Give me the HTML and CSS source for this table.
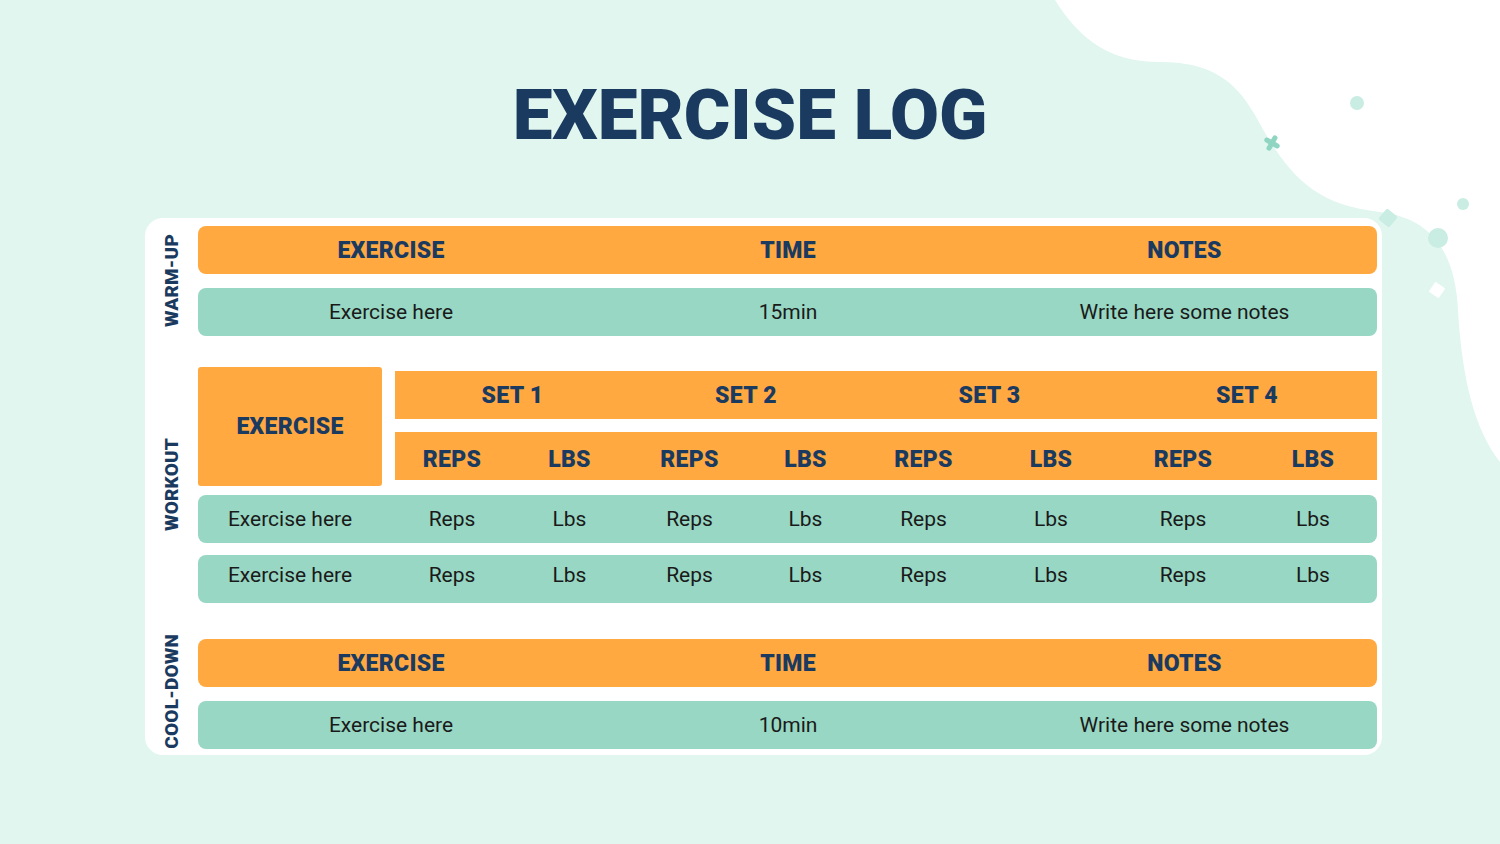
FILE: index.html
```html
<!DOCTYPE html>
<html lang="en">
<head>
<meta charset="utf-8">
<title>Exercise Log</title>
<link rel="stylesheet" href="styles.css">
</head>
<body>
<svg class="decor" width="1500" height="844" viewBox="0 0 1500 844" aria-hidden="true">
  <path d="M1055,0 C1080,40 1110,62 1160,62 C1210,62 1235,80 1255,115 C1285,170 1310,205 1380,212 C1430,218 1455,250 1458,310 C1462,380 1475,430 1500,462 L1500,0 Z" fill="#ffffff"/>
  <circle cx="1357" cy="103" r="7" fill="#c9ede2"/>
  <circle cx="1463" cy="204" r="6" fill="#c9ede2"/>
  <circle cx="1438" cy="238" r="10" fill="#c9ede2"/>
  <rect x="1381" y="211" width="14" height="14" rx="2" fill="#c9ede2" transform="rotate(40 1388 218)"/>
  <rect x="1431" y="284" width="12" height="12" rx="1" fill="#ffffff" transform="rotate(35 1437 290)"/>
  <g transform="rotate(30 1272 143)" stroke="#8fd5c1" stroke-width="5" stroke-linecap="round">
    <line x1="1272" y1="137" x2="1272" y2="149"/>
    <line x1="1266" y1="143" x2="1278" y2="143"/>
  </g>
</svg>

<main class="page">
  <h1 class="title">EXERCISE LOG</h1>

  <section class="card">
    <div class="block">
      <div class="side"><span class="side-label">WARM-UP</span></div>
      <div class="rows">
        <div class="bar head three">
          <span>EXERCISE</span><span>TIME</span><span>NOTES</span>
        </div>
        <div class="bar data three">
          <span>Exercise here</span><span>15min</span><span>Write here some notes</span>
        </div>
      </div>
    </div>

    <div class="block workout">
      <div class="side"><span class="side-label">WORKOUT</span></div>
      <div class="rows">
        <div class="w-head">
          <div class="w-ex">EXERCISE</div>
          <div class="w-sets">
            <span class="span2">SET 1</span>
            <span class="span2">SET 2</span>
            <span class="span2">SET 3</span>
            <span class="span2">SET 4</span>
          </div>
          <div class="w-sub">
            <span>REPS</span><span>LBS</span><span>REPS</span><span>LBS</span>
            <span>REPS</span><span>LBS</span><span>REPS</span><span>LBS</span>
          </div>
        </div>
        <div class="w-data-list">
          <div class="bar data wgrid">
            <span class="first">Exercise here</span>
            <span>Reps</span><span>Lbs</span><span>Reps</span><span>Lbs</span>
            <span>Reps</span><span>Lbs</span><span>Reps</span><span>Lbs</span>
          </div>
          <div class="bar data wgrid">
            <span class="first">Exercise here</span>
            <span>Reps</span><span>Lbs</span><span>Reps</span><span>Lbs</span>
            <span>Reps</span><span>Lbs</span><span>Reps</span><span>Lbs</span>
          </div>
        </div>
      </div>
    </div>

    <div class="block cool">
      <div class="side"><span class="side-label">COOL-DOWN</span></div>
      <div class="rows">
        <div class="bar head three">
          <span>EXERCISE</span><span>TIME</span><span>NOTES</span>
        </div>
        <div class="bar data three">
          <span>Exercise here</span><span>10min</span><span>Write here some notes</span>
        </div>
      </div>
    </div>
  </section>
</main>
</body>
</html>
```

FILE: styles.css
```css
html, body {
  margin: 0;
  padding: 0;
}

body {
  width: 1500px;
  height: 844px;
  overflow: hidden;
  position: relative;
  background: #e0f6ef;
  font-family: Roboto, "Liberation Sans", Arial, sans-serif;
  color: #1a1a1a;
}

.decor {
  position: absolute;
  left: 0;
  top: 0;
}

.page {
  position: relative;
  display: flex;
  flex-direction: column;
  align-items: flex-start;
}

.title {
  margin: 0;
  padding-top: 79px;
  height: 71px;
  align-self: stretch;
  text-align: center;
  font-family: Roboto, "Liberation Sans", sans-serif;
  font-weight: 900;
  font-size: 71px;
  line-height: 71px;
  letter-spacing: 0;
  color: #1b3a60;
}

.card {
  margin: 68px 0 0 145px;
  width: 1237px;
  height: 537px;
  box-sizing: border-box;
  padding: 8px 5px 6px 0;
  background: #ffffff;
  border-radius: 18px;
  display: flex;
  flex-direction: column;
}

.block {
  display: flex;
}

.workout {
  margin-top: 31px;
}

.cool {
  margin-top: 36px;
}

.side {
  width: 53px;
  flex: none;
  display: flex;
  align-items: center;
  justify-content: center;
}

.cool .side {
  align-items: flex-start;
}

.cool .side-label {
  margin-top: -5px;
}

.side-label {
  writing-mode: vertical-rl;
  transform: rotate(180deg);
  font-weight: 900;
  font-size: 19px;
  letter-spacing: 0.2px;
  color: #1b3a60;
  line-height: 1;
}

.rows {
  width: 1179px;
  display: flex;
  flex-direction: column;
  gap: 14px;
}

.bar {
  height: 48px;
  box-sizing: border-box;
  border-radius: 8px;
  align-items: center;
}

.head {
  background: #ffa940;
  font-weight: 900;
  font-size: 23px;
  letter-spacing: 0.3px;
  color: #1b3a60;
}

.data {
  background: #97d7c3;
  font-size: 21px;
  color: #1a1a1a;
}

.three {
  display: grid;
  grid-template-columns: 386px 408px 385px;
  text-align: center;
}

/* workout */
.workout .rows {
  gap: 9px;
}

.w-head {
  display: grid;
  grid-template-columns: 197px 982px;
  grid-template-rows: 48px 48px;
  row-gap: 13px;
  padding: 4px 0 6px;
}

.w-ex {
  grid-row: 1 / span 2;
  grid-column: 1;
  width: 184px;
  margin: -4px 0 -6px;
  background: #ffa940;
  border-radius: 3px;
  display: flex;
  align-items: center;
  justify-content: center;
  font-weight: 900;
  font-size: 23px;
  letter-spacing: 0.3px;
  color: #1b3a60;
}

.w-sets,
.w-sub {
  grid-column: 2;
  display: grid;
  grid-template-columns: 114px 121px 119px 113px 123px 132px 132px 128px;
  align-items: center;
  text-align: center;
  background: #ffa940;
  font-weight: 900;
  font-size: 23px;
  letter-spacing: 0.3px;
  color: #1b3a60;
}

.w-sub {
  padding-top: 7px;
}

.span2 {
  grid-column: span 2;
}

.w-data-list {
  display: flex;
  flex-direction: column;
  gap: 12px;
}

.wgrid {
  display: grid;
  grid-template-columns: 184px 13px 114px 121px 119px 113px 123px 132px 132px 128px;
  text-align: center;
}

.wgrid + .wgrid {
  padding-bottom: 8px;
}

.wgrid .first {
  grid-column: 1 / span 2;
  padding-right: 13px;
}

.wgrid .first + span {
  grid-column: 3;
}
```
